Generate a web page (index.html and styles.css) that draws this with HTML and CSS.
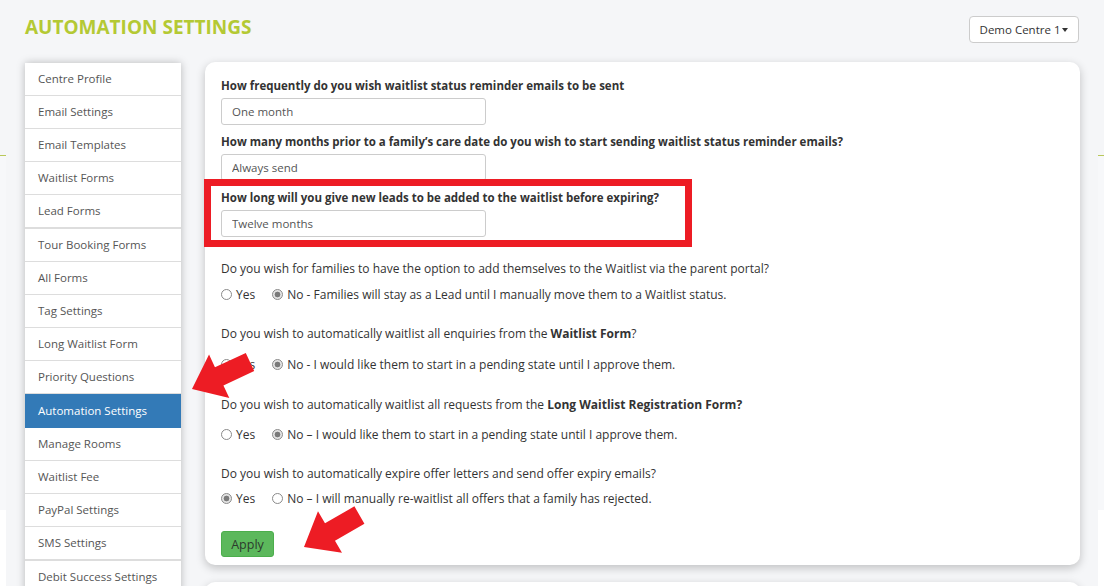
FILE: index.html
```html
<!DOCTYPE html>
<html lang="en">
<head>
    <meta charset="UTF-8">
    <meta name="viewport" content="width=device-width, initial-scale=1.0">
    <title>Automation Settings</title>
    <link rel="stylesheet" href="styles.css">
</head>
<body>
    <div class="page">
        <header class="topbar">
            <h1>AUTOMATION SETTINGS</h1>
            <button class="centre-select">Demo Centre 1<span class="caret"></span></button>
        </header>

        <div class="layout">
            <ul class="side-menu">
                <li><a href="#">Centre Profile</a></li>
                <li><a href="#">Email Settings</a></li>
                <li><a href="#">Email Templates</a></li>
                <li><a href="#">Waitlist Forms</a></li>
                <li class="group-end"><a href="#">Lead Forms</a></li>
                <li><a href="#">Tour Booking Forms</a></li>
                <li><a href="#">All Forms</a></li>
                <li><a href="#">Tag Settings</a></li>
                <li><a href="#">Long Waitlist Form</a></li>
                <li><a href="#">Priority Questions</a></li>
                <li class="active"><a href="#">Automation Settings</a></li>
                <li><a href="#">Manage Rooms</a></li>
                <li><a href="#">Waitlist Fee</a></li>
                <li><a href="#">PayPal Settings</a></li>
                <li class="group-end"><a href="#">SMS Settings</a></li>
                <li><a href="#">Debit Success Settings</a></li>
            </ul>

            <div class="content">
                <div class="card">
                    <form>
                        <div class="field">
                            <label>How frequently do you wish waitlist status reminder emails to be sent</label>
                            <input type="text" value="One month">
                        </div>
                        <div class="field">
                            <label>How many months prior to a family’s care date do you wish to start sending waitlist status reminder emails?</label>
                            <input type="text" value="Always send">
                        </div>
                        <div class="field last">
                            <label>How long will you give new leads to be added to the waitlist before expiring?</label>
                            <input type="text" value="Twelve months">
                        </div>

                        <div class="question q-portal">
                            <p>Do you wish for families to have the option to add themselves to the Waitlist via the parent portal?</p>
                            <div class="options">
                                <label><input type="radio" name="portal"> Yes</label>
                                <label><input type="radio" name="portal" checked> No - Families will stay as a Lead until I manually move them to a Waitlist status.</label>
                            </div>
                        </div>
                        <div class="question q-waitlist">
                            <p>Do you wish to automatically waitlist all enquiries from the <b>Waitlist Form</b>?</p>
                            <div class="options">
                                <label><input type="radio" name="waitlist"> Yes</label>
                                <label><input type="radio" name="waitlist" checked> No - I would like them to start in a pending state until I approve them.</label>
                            </div>
                        </div>
                        <div class="question q-long">
                            <p>Do you wish to automatically waitlist all requests from the <b>Long Waitlist Registration Form?</b></p>
                            <div class="options">
                                <label><input type="radio" name="long"> Yes</label>
                                <label><input type="radio" name="long" checked> No – I would like them to start in a pending state until I approve them.</label>
                            </div>
                        </div>
                        <div class="question q-expire">
                            <p>Do you wish to automatically expire offer letters and send offer expiry emails?</p>
                            <div class="options">
                                <label><input type="radio" name="expire" checked> Yes</label>
                                <label><input type="radio" name="expire"> No – I will manually re-waitlist all offers that a family has rejected.</label>
                            </div>
                        </div>

                        <button type="button" class="apply">Apply</button>
                    </form>
                </div>
                <div class="card card-next"></div>
            </div>
        </div>

        <!-- screenshot annotations -->
        <div class="edge edge-left"></div>
        <div class="edge edge-right"></div>
        <div class="highlight"></div>
        <svg class="arrows" width="1104" height="586" viewBox="0 0 1104 586">
            <g transform="translate(192,389) rotate(-25)">
                <polygon points="0,0 30,-24 30,-10 64,-10 64,10 30,10 30,24" fill="#ed1c24"/>
            </g>
            <g transform="translate(304,547) rotate(-30)">
                <polygon points="0,0 30,-24 30,-10 64,-10 64,10 30,10 30,24" fill="#ed1c24"/>
            </g>
        </svg>
    </div>
</body>
</html>
```

FILE: styles.css
```css
body {
    margin: 0;
    padding: 0;
    background-color: #f5f6f8;
    color: #333;
    font-family: "Open Sans", "Liberation Sans", sans-serif;
    overflow: hidden;
}
.page {
    position: relative;
    height: 586px;
}
.topbar {
    display: flex;
    justify-content: space-between;
    align-items: flex-start;
    height: 46px;
    padding: 16px 25px 0 25px;
}
.topbar h1 {
    margin: -2px 0 0 0;
    font-size: 19px;
    line-height: 26px;
    font-weight: 700;
    color: #b4c934;
}
.centre-select {
    width: 110px;
    height: 27px;
    padding: 0 8px;
    background-color: #fff;
    border: 1px solid #ccc;
    border-radius: 4px;
    font-family: inherit;
    font-size: 11.5px;
    color: #333;
    display: flex;
    align-items: center;
    justify-content: center;
}
.caret {
    display: inline-block;
    margin-left: 2px;
    border-top: 4px solid #333;
    border-left: 3.5px solid transparent;
    border-right: 3.5px solid transparent;
}
.layout {
    display: flex;
    gap: 24px;
    padding: 0 24px 0 25px;
}
.side-menu {
    list-style: none;
    margin: 1px 0 0 0;
    padding: 0;
    width: 156px;
    flex-shrink: 0;
    background-color: #fff;
    box-shadow: 0 0 8px rgba(0, 0, 0, 0.25);
    align-self: flex-start;
}
.side-menu li {
    border-bottom: 1px solid #ddd;
}
.side-menu li.group-end {
    border-bottom-width: 2px;
}
.side-menu a {
    display: block;
    height: 32px;
    line-height: 32px;
    padding: 0 13px;
    font-size: 11.5px;
    color: #555;
    text-decoration: none;
    white-space: nowrap;
}
.side-menu li.active {
    background-color: #337ab7;
    border-bottom-color: #337ab7;
}
.side-menu li.active a {
    color: #fff;
    height: 33px;
    line-height: 34px;
}
.content {
    flex: 1;
    display: flex;
    flex-direction: column;
    gap: 17px;
}
.card {
    background-color: #fff;
    border-radius: 10px;
    box-shadow: 0 3px 10px rgba(0, 0, 0, 0.22);
    padding: 16px 16px 8px 16px;
}
.card-next {
    height: 60px;
}
.field {
    margin-bottom: 9px;
}
.field.last {
    margin-bottom: 23px;
}
.field label {
    display: block;
    font-size: 11.5px;
    line-height: 16px;
    font-weight: 700;
    color: #333;
    margin-bottom: 4px;
}
.field input {
    box-sizing: border-box;
    width: 265px;
    height: 27px;
    padding: 0 10px;
    border: 1px solid #ccc;
    border-radius: 3px;
    font-family: inherit;
    font-size: 11.5px;
    color: #555;
}
.question {
    margin-bottom: 22px;
}
.question p {
    margin: 0;
    font-size: 12px;
    line-height: 17px;
}
.options {
    display: flex;
    margin-top: 9px;
    font-size: 12px;
    line-height: 17px;
}
.q-waitlist {
    margin-bottom: 23px;
}
.q-waitlist .options {
    margin-top: 14px;
}
.q-long .options {
    margin-top: 13px;
}
.q-expire .options {
    margin-top: 8px;
}
.options label {
    display: inline-flex;
    align-items: center;
    margin-right: 17px;
}
.options input[type="radio"] {
    appearance: none;
    box-sizing: border-box;
    width: 11px;
    height: 11px;
    margin: 0 4px 0 0;
    border: 1px solid #8a8a8a;
    border-radius: 50%;
    background-color: #fff;
}
.options input[type="radio"]:checked {
    background: radial-gradient(circle, #7a7a7a 0 2.6px, #e4e4e4 3.2px);
    border-color: #8a8a8a;
}
.apply {
    margin-top: 2px;
    width: 53px;
    height: 26px;
    padding: 0;
    background-color: #5cb85c;
    border: 1px solid #4cae4c;
    border-radius: 3px;
    color: #2d3a2d;
    font-family: "Open Sans", sans-serif;
    font-size: 12.5px;
}
.highlight {
    position: absolute;
    left: 204px;
    top: 179px;
    width: 474px;
    height: 54px;
    border: 7px solid #ed1c24;
}
.arrows {
    position: absolute;
    left: 0;
    top: 0;
    pointer-events: none;
}
.edge {
    position: absolute;
    top: 0;
    width: 6px;
    height: 586px;
    background: linear-gradient(#f5f6f8 0, #f5f6f8 155px, #b9c85a 155px, #b9c85a 156px, #f7f8fa 156px, #f7f8fa 510px, #fff 510px);
}
.edge-left {
    left: 0;
}
.edge-right {
    right: 0;
}
```
